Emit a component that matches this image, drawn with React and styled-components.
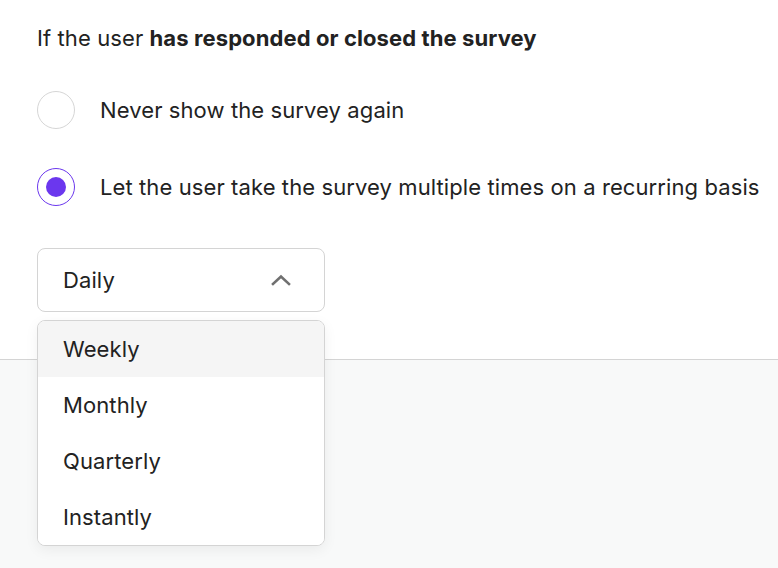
import React from 'react'
import styled, { createGlobalStyle } from 'styled-components'

const GlobalStyle = createGlobalStyle`
  body {
    margin: 0;
    font-family: Inter, "Noto Sans", sans-serif;
    color: #222;
    background: #f8f9f9;
    letter-spacing: 0.1px;
  }
`

const UI = {
  Page: styled.div`
    min-height: 568px;
    display: flex;
    flex-direction: column;
  `,
  Section: styled.div`
    background: #fff;
    height: 360px;
    padding: 24px 0 0 37px;
    box-sizing: border-box;
    border-bottom: 1px solid #d4d4d4;
  `,
  Footer: styled.div`
    flex: 1;
    background: #f8f9f9;
  `,
  Heading: styled.p`
    margin: 0;
    font-size: 22px;
    line-height: 28px;
    white-space: nowrap;
    b { font-weight: 700; }
  `,
  Options: styled.div`
    display: flex;
    flex-direction: column;
    gap: 39px;
    margin-top: 39px;
  `,
  Option: styled.label`
    display: flex;
    align-items: center;
    gap: 25px;
    font-size: 22px;
    line-height: 38px;
    white-space: nowrap;
    cursor: pointer;
  `,
  Radio: styled.span`
    width: 38px;
    height: 38px;
    box-sizing: border-box;
    border-radius: 50%;
    border: 1px solid ${p => (p.$checked ? '#6b37ee' : '#d6d6d6')};
    display: flex;
    align-items: center;
    justify-content: center;
    flex-shrink: 0;
    &::after {
      content: '';
      width: 20px;
      height: 20px;
      border-radius: 50%;
      background: #6b37ee;
      display: ${p => (p.$checked ? 'block' : 'none')};
    }
  `,
  SelectWrap: styled.div`
    position: relative;
    width: 288px;
    margin-top: 42px;
  `,
  Select: styled.button`
    width: 100%;
    height: 64px;
    box-sizing: border-box;
    display: flex;
    align-items: center;
    justify-content: space-between;
    padding: 0 33px 0 25px;
    background: #fff;
    border: 1px solid #d4d4d4;
    border-radius: 8px;
    font: inherit;
    font-size: 22px;
    letter-spacing: 0.1px;
    color: #222;
  `,
  Menu: styled.ul`
    position: absolute;
    top: 72px;
    left: 0;
    width: 100%;
    box-sizing: border-box;
    margin: 0;
    padding: 0;
    list-style: none;
    background: #fff;
    border: 1px solid #d4d4d4;
    border-radius: 8px;
    overflow: hidden;
    box-shadow: 0 4px 14px rgba(0, 0, 0, 0.06);
  `,
  Item: styled.li`
    height: 56px;
    display: flex;
    align-items: center;
    padding-left: 25px;
    font-size: 22px;
    background: ${p => (p.$active ? '#f5f5f5' : '#fff')};
  `
}

const Chevron = () => (
  <svg width="20" height="12" viewBox="0 0 20 12" fill="none">
    <path d="M2 10 L10 2.5 L18 10" stroke="#707070" strokeWidth="2.6" strokeLinecap="square" />
  </svg>
)

const options = ['Weekly', 'Monthly', 'Quarterly', 'Instantly']

export default function App() {
  return (
    <UI.Page>
      <GlobalStyle />
      <UI.Section>
        <UI.Heading>
          If the user <b>has responded or closed the survey</b>
        </UI.Heading>
        <UI.Options>
          <UI.Option>
            <UI.Radio />
            Never show the survey again
          </UI.Option>
          <UI.Option>
            <UI.Radio $checked />
            Let the user take the survey multiple times on a recurring basis
          </UI.Option>
        </UI.Options>
        <UI.SelectWrap>
          <UI.Select>
            Daily
            <Chevron />
          </UI.Select>
          <UI.Menu>
            {options.map((o, i) => (
              <UI.Item key={o} $active={i === 0}>{o}</UI.Item>
            ))}
          </UI.Menu>
        </UI.SelectWrap>
      </UI.Section>
      <UI.Footer />
    </UI.Page>
  )
}
